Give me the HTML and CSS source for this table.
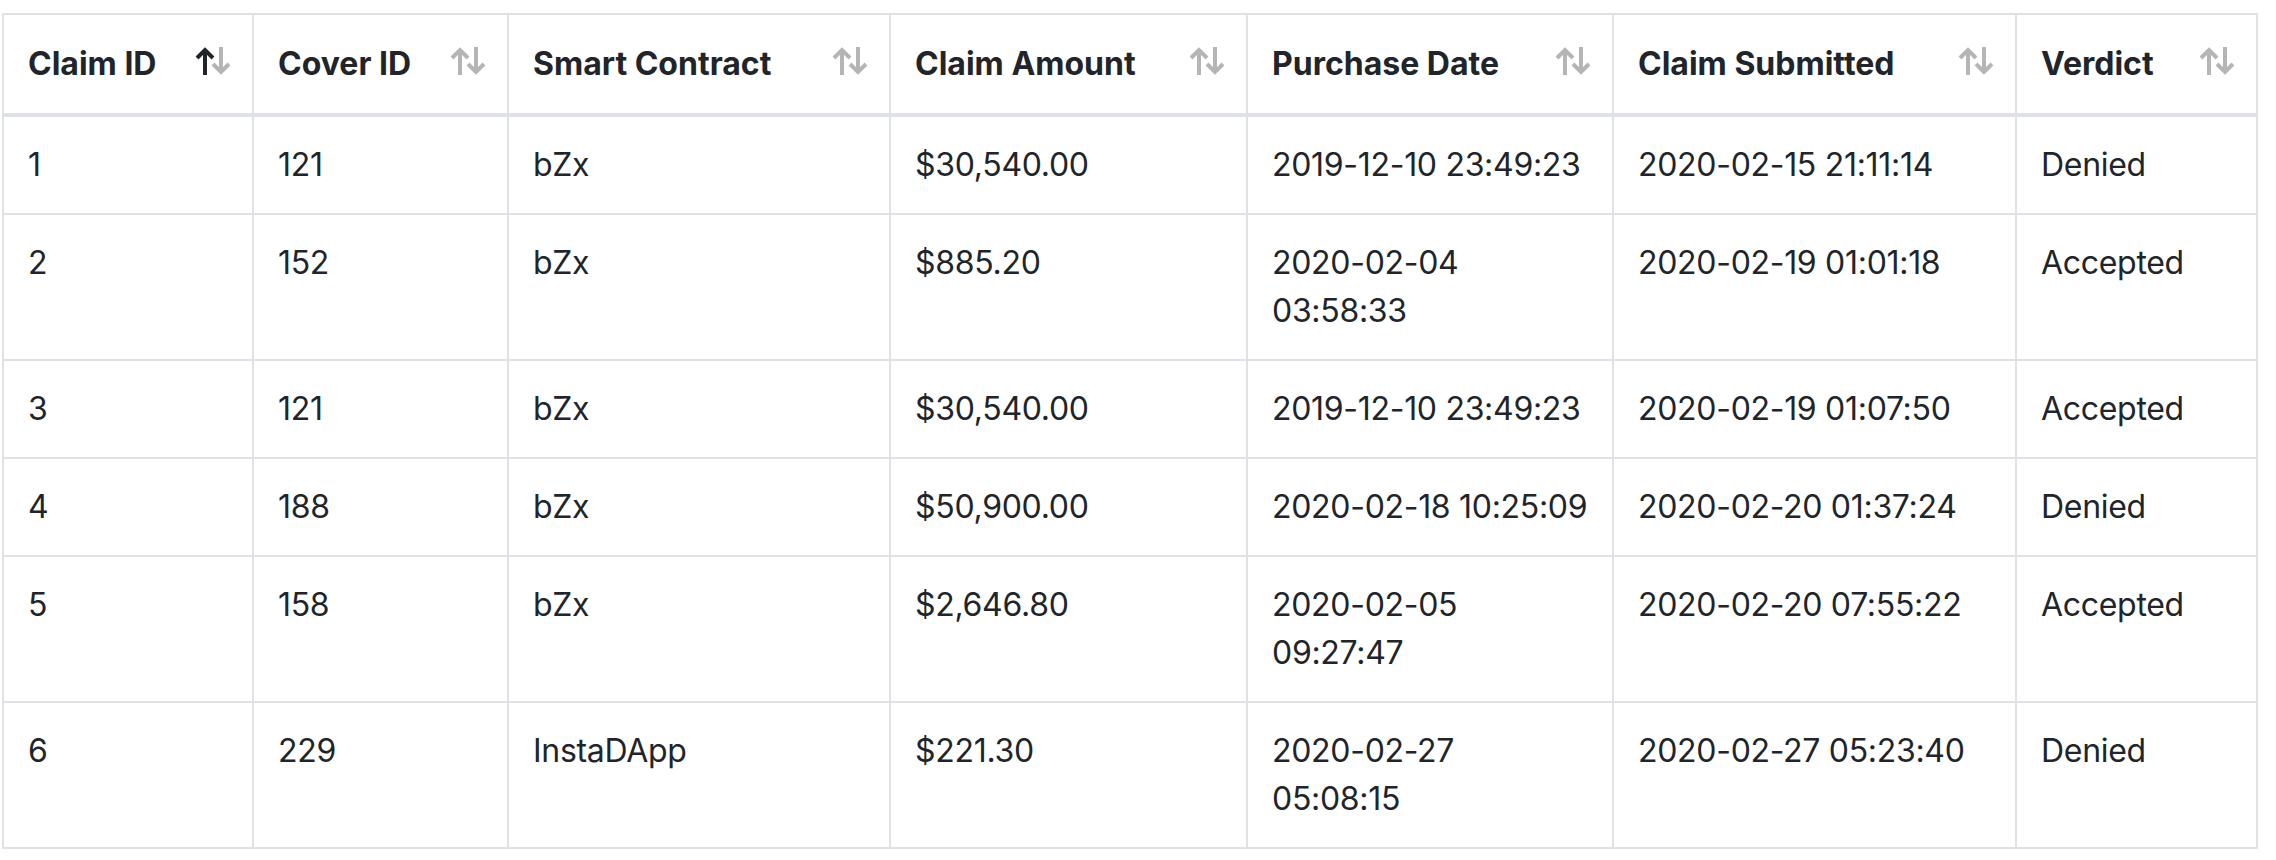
FILE: index.html
```html
<!DOCTYPE html>
<html lang="en">
<head>
<meta charset="utf-8">
<title>Claims</title>
<link rel="stylesheet" href="styles.css">
</head>
<body>
<table class="claims">
  <colgroup>
    <col class="c-claim">
    <col class="c-cover">
    <col class="c-contract">
    <col class="c-amount">
    <col class="c-purchase">
    <col class="c-submitted">
    <col class="c-verdict">
  </colgroup>
  <thead>
    <tr>
      <th><div class="th-inner"><span>Claim ID</span><svg class="sort asc" viewBox="0 0 38 30" width="38" height="30"><path class="up" d="M11 29V4M3 12l8-8 8 8"/><path class="down" d="M27 1v25M19 18l8 8 8-8"/></svg></div></th>
      <th><div class="th-inner"><span>Cover ID</span><svg class="sort" viewBox="0 0 38 30" width="38" height="30"><path class="up" d="M11 29V4M3 12l8-8 8 8"/><path class="down" d="M27 1v25M19 18l8 8 8-8"/></svg></div></th>
      <th><div class="th-inner"><span>Smart Contract</span><svg class="sort" viewBox="0 0 38 30" width="38" height="30"><path class="up" d="M11 29V4M3 12l8-8 8 8"/><path class="down" d="M27 1v25M19 18l8 8 8-8"/></svg></div></th>
      <th><div class="th-inner"><span>Claim Amount</span><svg class="sort" viewBox="0 0 38 30" width="38" height="30"><path class="up" d="M11 29V4M3 12l8-8 8 8"/><path class="down" d="M27 1v25M19 18l8 8 8-8"/></svg></div></th>
      <th><div class="th-inner"><span>Purchase Date</span><svg class="sort" viewBox="0 0 38 30" width="38" height="30"><path class="up" d="M11 29V4M3 12l8-8 8 8"/><path class="down" d="M27 1v25M19 18l8 8 8-8"/></svg></div></th>
      <th><div class="th-inner"><span>Claim Submitted</span><svg class="sort" viewBox="0 0 38 30" width="38" height="30"><path class="up" d="M11 29V4M3 12l8-8 8 8"/><path class="down" d="M27 1v25M19 18l8 8 8-8"/></svg></div></th>
      <th><div class="th-inner"><span>Verdict</span><svg class="sort" viewBox="0 0 38 30" width="38" height="30"><path class="up" d="M11 29V4M3 12l8-8 8 8"/><path class="down" d="M27 1v25M19 18l8 8 8-8"/></svg></div></th>
    </tr>
  </thead>
  <tbody>
    <tr><td>1</td><td>121</td><td>bZx</td><td>$30,540.00</td><td>2019-12-10 23:49:23</td><td>2020-02-15 21:11:14</td><td>Denied</td></tr>
    <tr><td>2</td><td>152</td><td>bZx</td><td>$885.20</td><td>2020-02-04 03:58:33</td><td>2020-02-19 01:01:18</td><td>Accepted</td></tr>
    <tr><td>3</td><td>121</td><td>bZx</td><td>$30,540.00</td><td>2019-12-10 23:49:23</td><td>2020-02-19 01:07:50</td><td>Accepted</td></tr>
    <tr><td>4</td><td>188</td><td>bZx</td><td>$50,900.00</td><td>2020-02-18 10:25:09</td><td>2020-02-20 01:37:24</td><td>Denied</td></tr>
    <tr><td>5</td><td>158</td><td>bZx</td><td>$2,646.80</td><td>2020-02-05 09:27:47</td><td>2020-02-20 07:55:22</td><td>Accepted</td></tr>
    <tr><td>6</td><td>229</td><td>InstaDApp</td><td>$221.30</td><td>2020-02-27 05:08:15</td><td>2020-02-27 05:23:40</td><td>Denied</td></tr>
  </tbody>
</table>
</body>
</html>
```

FILE: styles.css
```css
html, body {
  background: #ffffff;
}

body {
  margin: 13px 0 0 2px;
  font-family: Inter, "Liberation Sans", sans-serif;
  font-size: 32px;
  line-height: 48px;
  color: #212529;
}

.claims {
  width: 2256px;
  table-layout: fixed;
  border-collapse: collapse;
  border: 2px solid #dee2e6;
}

.c-claim { width: 250px; }
.c-cover { width: 255px; }
.c-contract { width: 382px; }
.c-amount { width: 357px; }
.c-purchase { width: 366px; }
.c-submitted { width: 403px; }
.c-verdict { width: 241px; }

.claims th,
.claims td {
  border: 2px solid #dee2e6;
  text-align: left;
  vertical-align: top;
}

.claims th {
  padding: 25px 24px 25px 24px;
  font-weight: 700;
  border-bottom-width: 4px;
}

.claims td {
  padding: 24px;
  font-weight: 400;
  letter-spacing: -0.3px;
}

.th-inner {
  display: flex;
  align-items: center;
  justify-content: space-between;
  white-space: nowrap;
}

.sort {
  flex: none;
  margin-right: -4px;
  margin-bottom: 7px;
  fill: none;
  stroke-width: 4;
}

.sort .up,
.sort .down {
  stroke: #b5b5b5;
}

.sort.asc .up {
  stroke: #212529;
}
```
